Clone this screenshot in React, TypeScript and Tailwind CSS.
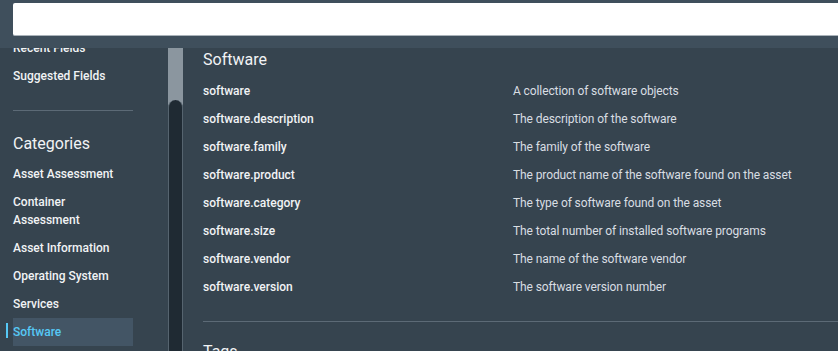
import React from 'react';

const fields = [
  { name: 'software', desc: 'A collection of software objects' },
  { name: 'software.description', desc: 'The description of the software' },
  { name: 'software.family', desc: 'The family of the software' },
  { name: 'software.product', desc: 'The product name of the software found on the asset' },
  { name: 'software.category', desc: 'The type of software found on the asset' },
  { name: 'software.size', desc: 'The total number of installed software programs' },
  { name: 'software.vendor', desc: 'The name of the software vendor' },
  { name: 'software.version', desc: 'The software version number' },
];

const categories = [
  'Asset Assessment',
  'Container Assessment',
  'Asset Information',
  'Operating System',
  'Services',
  'Software',
];

function SideItem({ label, active }: { label: string; active?: boolean }) {
  return (
    <div
      className={
        'relative py-[5px] text-[12px] leading-[18px] font-medium ' +
        (active ? 'bg-[#435565] text-[#56c8f5]' : 'text-[#f1f3f5]')
      }
    >
      {active && <span className="absolute left-[-7px] top-[5px] h-[15px] w-[2px] bg-[#56c8f5]" />}
      {label}
    </div>
  );
}

export default function App() {
  return (
    <div
      className="flex h-[351px] w-[838px] flex-col overflow-hidden bg-[#36444f]"
      style={{ fontFamily: 'Roboto, "Liberation Sans", sans-serif' }}
    >
      <div className="h-[48px] shrink-0 bg-[#3f4f5c] pl-[13px] pt-[3px]">
        <div className="h-[33px] rounded-l-[2px] border-b border-[#aab3ba] bg-white" />
      </div>

      <div className="flex min-h-0 flex-1">
        <aside className="w-[168px] shrink-0 overflow-hidden">
          <div className="mt-[-14px] px-[13px]">
            <div className="w-[120px]">
              <SideItem label="Recent Fields" />
              <SideItem label="Suggested Fields" />
            </div>
            <div className="mt-[20px] h-px w-[120px] bg-[#5c6a76]" />
            <h3 className="mt-[21px] text-[16px] leading-[24px] text-[#f1f3f5]">Categories</h3>
            <div className="mt-[4px] w-[120px]">
              {categories.map((c) => (
                <SideItem key={c} label={c} active={c === 'Software'} />
              ))}
            </div>
          </div>
        </aside>

        <div className="flex w-[15px] shrink-0 flex-col bg-[#8b969f]">
          <div className="mt-[52px] flex-1 rounded-t-full border-x border-[#56646f] bg-[#1f2a33]" />
        </div>

        <main className="min-w-0 flex-1 pl-[20px] pt-px">
          <h2 className="text-[16px] leading-[22px] text-[#f1f3f5]">Software</h2>
          <div className="mt-[6px]">
            {fields.map((f) => (
              <div key={f.name} className="grid h-[28px] grid-cols-[310px_1fr] items-center text-[12px]">
                <span className="font-medium text-[#f1f3f5]">{f.name}</span>
                <span className="whitespace-nowrap tracking-[-0.1px] text-[#d9dee3]">{f.desc}</span>
              </div>
            ))}
          </div>
          <div className="mt-[20px] h-px bg-[#5c6a76]" />
          <h2 className="mt-[19px] text-[16px] leading-[22px] text-[#f1f3f5]">Tags</h2>
        </main>
      </div>
    </div>
  );
}
